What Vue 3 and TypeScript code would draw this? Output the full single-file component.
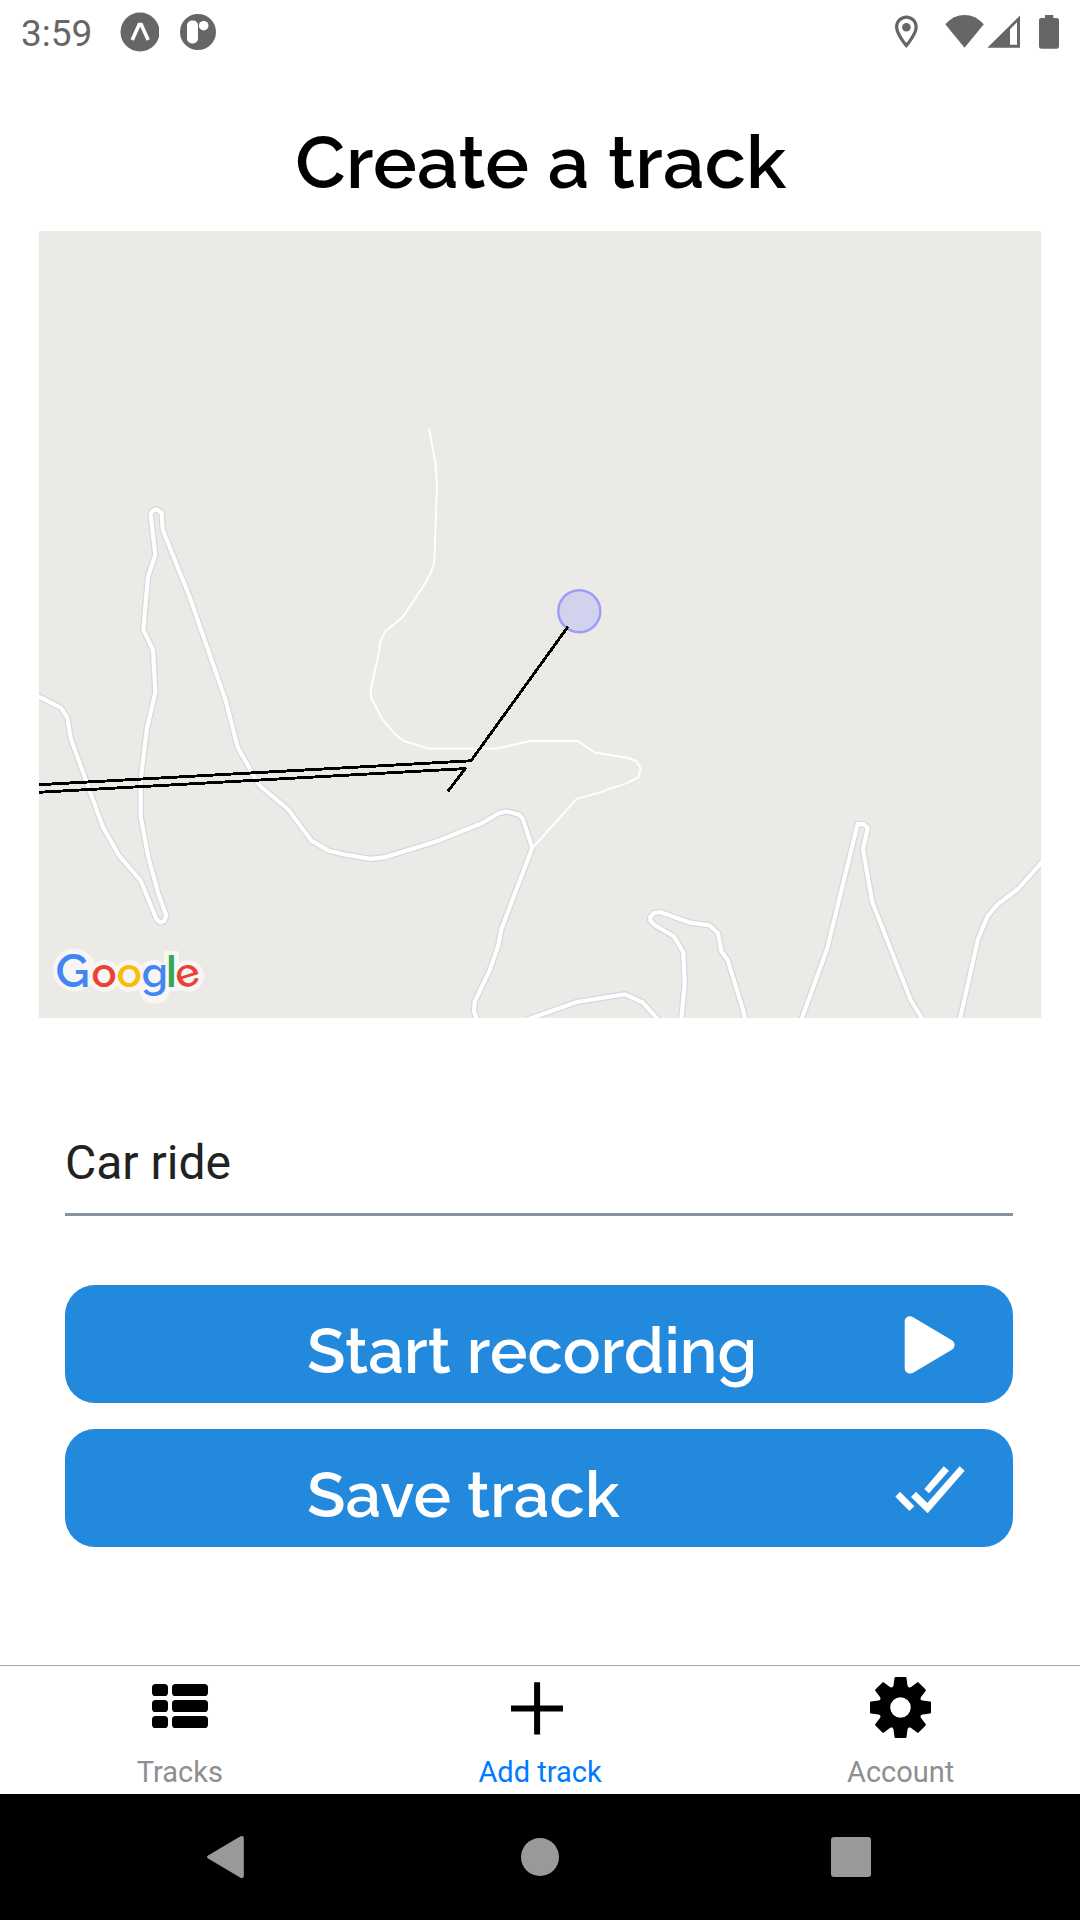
<script setup lang="ts">
import { ref } from 'vue'

interface Tab {
  id: string
  label: string
}

const tabs: Tab[] = [
  { id: 'tracks', label: 'Tracks' },
  { id: 'add', label: 'Add track' },
  { id: 'account', label: 'Account' },
]
const activeTab = ref('add')
const trackName = ref('Car ride')

// Roads with a casing
const roads: string[] = [
  'M36 695 L61 707.8 L67.3 717.7 L70.7 738.4 L85 777.8 L102.7 826.4 L118.7 855.1 L140.7 880.7 L156.7 919.8 L160.3 922.4 L164 921.3 L166.3 915.5 L158 892.6 L148.3 857 L140.7 816.8 L140.7 779.7 L147 728 L155.3 692.4 L153 650 L143.3 629.7 L148 576.9 L155.3 554.7 L150.7 514.9 L152.3 511.1 L156.3 509.2 L161.7 513 L162.7 529.8 L189.3 596 L225.7 700.5 L237.7 747.5 L259.3 785.4 L288.3 809.5 L311.7 840.9 L329 850.9 L343.3 854.3 L370 858.9 L384 857.4 L436.7 841.3 L481.7 823.3 L499.3 813 L506.7 811.5 L519 814.5 L522.7 818.7 L532.3 847.8 L501.7 928.2 L498 946.5 L489.7 970.3 L474.7 1001.6 L474 1011.2 L478 1022',
  'M526 1020 L576.7 1002 L625 994.3 L642.7 1002.3 L660 1021.7',
  'M681 1022 L684.7 984 L683.3 952 L673.7 936.3 L655 925.3 L650.3 920.7 L650.3 917 L654 913 L660.3 912 L690 922.7 L709.3 925.3 L718 933 L721.3 951.3 L727.7 960 L743.7 1012 L745.5 1022',
  'M800.5 1022 L827 949.3 L857.7 823.7 L864.3 824.7 L867.7 828.3 L863 849.3 L872.3 902.3 L910.7 1000 L924 1022',
  'M959.3 1022 L978 939 L987.7 916 L998.3 903.7 L1017.7 889.3 L1045 858.5',
]
const footpath =
  'M429 428 L435.3 462.1 L437 485 L434.3 562.3 L431 572.3 L424 585.3 L402.7 617.1 L385 631.6 L380.3 641.9 L378.7 653.4 L370.7 690.2 L371.3 698.2 L382.3 719.2 L395.3 734.5 L405 741.4 L429 748.7 L496 748.7 L530 741 L577.7 741 L594.7 752.5 L629.3 758.3 L637 761.7 L640.7 768.6 L638.3 777.4 L626.7 783.1 L600 792.3 L576.7 798.8 L533.3 847'
const recorded = 'M30 785.2 L471 760.8 L568 626.6 M30 792.8 L465.3 768.6 L447.7 791.6'

const logo = [
  { ch: 'G', x: 55.4, y: 986.5, size: 47.5, turn: 0, color: '#4285f4' },
  { ch: 'o', x: 91.6, y: 986.5, size: 41.5, turn: 0, color: '#ea4335' },
  { ch: 'o', x: 116.8, y: 986.5, size: 41.5, turn: 0, color: '#fbbc05' },
  { ch: 'g', x: 141.8, y: 986.5, size: 41.5, turn: 0, color: '#4285f4' },
  { ch: 'l', x: 166, y: 986.5, size: 42, turn: 0, color: '#34a853' },
  { ch: 'e', x: 179.4, y: 989.6, size: 40, turn: -18, color: '#ea4335' },
]
const gearTeeth = [0, 45, 90, 135, 180, 225, 270, 315]
</script>

<template>
  <div class="screen">
    <header class="status">
      <span class="clock">3:59</span>
      <svg class="app-a" width="39" height="40" viewBox="0 0 39 40">
        <circle cx="20" cy="20" r="19.5" fill="#666" />
        <path d="M12.2 28 L19.2 12.5 H21.2 L28.2 28" fill="none" stroke="#fff" stroke-width="3.6" />
      </svg>
      <svg class="app-r" width="38" height="38" viewBox="0 0 38 38">
        <circle cx="19" cy="19" r="18" fill="#666" />
        <rect x="8" y="7.5" width="11" height="23" rx="5" fill="#fff" />
        <circle cx="24.7" cy="12.7" r="4.8" fill="#fff" />
      </svg>
      <span class="grow"></span>
      <svg class="signals" width="165" height="36" viewBox="894 13 165 36">
        <path
          fill="#666"
          fill-rule="evenodd"
          d="M906.4 14.5 C900 14.5 895 19.6 895 26 C895 34.3 906.4 47 906.4 47 S917.8 34.3 917.8 26 C917.8 19.6 912.8 14.5 906.4 14.5 Z M906.4 17.8 C911 17.8 914.5 21.4 914.5 26 C914.5 30.8 909.5 38.2 906.4 42 C903.3 38.2 898.3 30.8 898.3 26 C898.3 21.4 901.8 17.8 906.4 17.8 Z"
        />
        <circle cx="906.4" cy="26.2" r="4.3" fill="#666" />
        <path d="M945.3 23.2 Q953.5 14 964.5 14 T983.8 23.2 L964.5 46.7 Z" fill="#666" />
        <path fill="#666" fill-rule="evenodd" d="M1020 14.5 V46.8 H987.3 Z M1010 28.3 V43.8 H1017 V21.3 Z" />
        <path d="M1045 14 H1053.3 V17 H1056.8 Q1059 17 1059 19.2 V45.6 Q1059 47.8 1056.8 47.8 H1041.2 Q1039 47.8 1039 45.6 V19.2 Q1039 17 1041.2 17 H1045 Z" fill="#666" />
      </svg>
    </header>

    <h1 class="title">Create a track</h1>

    <svg class="map" width="1002" height="787" viewBox="39 231 1002 787">
      <rect x="39" y="231" width="1002" height="787" fill="#ebeae7" />
      <g fill="none" stroke-linejoin="round">
        <path v-for="(d, i) in roads" :key="'c' + i" :d="d" stroke="#d5d7dc" stroke-width="6.6" />
        <path :d="footpath" stroke="#fff" stroke-width="1.9" />
        <path v-for="(d, i) in roads" :key="'r' + i" :d="d" stroke="#fff" stroke-width="4.2" />
        <path :d="recorded" stroke="#000" stroke-width="2.9" shape-rendering="crispEdges" />
      </g>
      <circle cx="579.3" cy="611.3" r="21" fill="#d2d1ee" stroke="#9c9cf9" stroke-width="2.4" />
      <path d="M562 635 L568 626.6" stroke="#000" stroke-width="2.9" shape-rendering="crispEdges" />
      <!-- pale backing behind the logo -->
      <g fill="#f7f6f4">
        <circle cx="74.5" cy="970" r="21.5" />
        <circle cx="104.5" cy="976" r="16" />
        <circle cx="129.5" cy="976" r="16" />
        <circle cx="154" cy="976" r="16" />
        <rect x="139.5" y="976" width="30" height="27.5" rx="13" />
        <rect x="164" y="951" width="15" height="40" rx="1" />
        <circle cx="188" cy="976" r="16" />
      </g>
      <text class="logo"><tspan v-for="(l, i) in logo" :key="i" :class="{ bar: l.ch === 'l' }" :x="l.x" :y="l.y" :rotate="l.turn" :font-size="l.size" :fill="l.color">{{ l.ch }}</tspan></text>
    </svg>

    <main class="form">
      <div class="field">{{ trackName }}</div>
      <button class="action" type="button">
        <span>Start recording</span>
        <svg class="play" width="52" height="60" viewBox="903 1314.5 52 60">
          <path d="M904.7 1321.5 C904.7 1316.5 909 1314.2 913.5 1317 L951.5 1339.5 C955.6 1342 955.6 1347 951.5 1349.5 L913.5 1372 C909 1374.5 904.7 1372 904.7 1367.5 Z" fill="#fff" />
        </svg>
      </button>
      <button class="action" type="button">
        <span>Save track</span>
        <svg class="checks" width="70" height="48" viewBox="1004 617 210 144">
          <path d="M1052 710 L1067 694 L1101 728 L1198 618 L1213 631 L1102 759 Z M1092 686 L1150 618 L1166 631 L1106 699 Z M1005 709 L1019 694 L1062 738 L1047 752 Z" fill="#fff" />
        </svg>
      </button>
    </main>

    <nav class="tabs">
      <a v-for="t in tabs" :key="t.id" class="tab" :class="{ active: t.id === activeTab }">
        <svg v-if="t.id === 'tracks'" width="62" height="62" viewBox="149 1676 62 62">
          <template v-for="y in [1684, 1700, 1716]" :key="y">
            <rect x="152" :y="y" width="16" height="12" rx="3.6" />
            <rect x="172" :y="y" width="36" height="12" rx="3.6" />
          </template>
        </svg>
        <svg v-else-if="t.id === 'add'" width="62" height="62" viewBox="509 1676 62 62">
          <path d="M511 1708.4 H563 M537.1 1682.3 V1734.5" stroke="#000" stroke-width="6" />
        </svg>
        <svg v-else width="62" height="62" viewBox="-31.5 -31.5 62 62">
          <path
            v-for="a in gearTeeth"
            :key="a"
            :transform="`rotate(${a})`"
            d="M-10 -17 Q-7.5 -20 -7 -22 L-6 -29.5 Q-5.8 -30.5 -5 -30.5 H5 Q5.8 -30.5 6 -29.5 L7 -22 Q7.5 -20 10 -17 Z"
          />
          <circle r="16" fill="none" stroke="#000" stroke-width="11.4" />
        </svg>
        <span>{{ t.label }}</span>
      </a>
    </nav>

    <footer class="system">
      <svg width="1080" height="126" viewBox="0 1794 1080 126" fill="#999">
        <path d="M208 1855.5 L240.5 1836.3 Q243.8 1835 243.8 1838 V1876 Q243.8 1879 240.5 1877.7 L208 1858.5 Q206 1857 208 1855.5 Z" />
        <circle cx="540" cy="1857" r="19" />
        <rect x="831" y="1837" width="40" height="40" rx="3" />
      </svg>
    </footer>
  </div>
</template>

<style>
body {
  margin: 0;
  background: #fff;
}
</style>

<style scoped>
.screen {
  width: 1080px;
  height: 1920px;
  display: flex;
  flex-direction: column;
  background: #fff;
  overflow: hidden;
  font-family: Roboto, sans-serif;
}
svg {
  display: block;
  flex: none;
}
.status {
  height: 63px;
  flex: none;
  display: flex;
  align-items: center;
  padding: 0 21px 0 21px;
  box-sizing: border-box;
}
.clock {
  width: 99px;
  font-size: 37px;
  line-height: 44px;
  margin-top: 5px;
  color: #666;
}
.app-r {
  margin-left: 20px;
}
.grow {
  flex: 1;
}
.title {
  margin: 0;
  height: 168px;
  padding: 57px 0 0 2px;
  box-sizing: border-box;
  flex: none;
  text-align: center;
  font-family: Raleway, Lato, sans-serif;
  font-size: 73.5px;
  line-height: 84px;
  font-weight: 600;
  letter-spacing: 0.3px;
  color: #000;
}
.map {
  margin-left: 39px;
}
.logo {
  font-family: Raleway, Lato, sans-serif;
  font-weight: 600;
}
.logo .bar {
  font-family: Roboto, sans-serif;
  font-weight: 500;
}
.form {
  flex: 1;
  display: flex;
  flex-direction: column;
  padding: 110px 67px 0 65px;
}
.field {
  height: 85px;
  border-bottom: 3px solid #86939e;
  box-sizing: content-box;
  font-size: 48px;
  line-height: 70px;
  color: #222;
  margin-bottom: 69px;
}
.action {
  height: 118px;
  margin: 0 0 26px;
  padding: 0 0 0 242px;
  border: 0;
  border-radius: 30px;
  background: #2289dc;
  color: #fff;
  display: flex;
  align-items: center;
  justify-content: space-between;
  font-family: Raleway, Lato, sans-serif;
  font-size: 63px;
  line-height: 74px;
  font-weight: 600;
  letter-spacing: 0.18px;
}
.action span {
  margin-top: 14px;
}
.play {
  margin: 1px 58px 0 0;
}
.checks {
  margin: 4px 48px 0 0;
}
.tabs {
  height: 129px;
  box-sizing: border-box;
  border-top: 1px solid #a7a7aa;
  display: flex;
  flex: none;
}
.tab {
  flex: 1;
  display: flex;
  flex-direction: column;
  align-items: center;
  padding-top: 10px;
  font-size: 29px;
  line-height: 34px;
  color: #8e8e93;
}
.tab:last-child {
  padding-left: 1px;
}
.tab span {
  margin-top: 17px;
}
.tab + .tab span {
  padding-left: 1px;
}
.tab.active {
  color: #007aff;
}
.system {
  height: 126px;
  flex: none;
  background: #000;
}
</style>
